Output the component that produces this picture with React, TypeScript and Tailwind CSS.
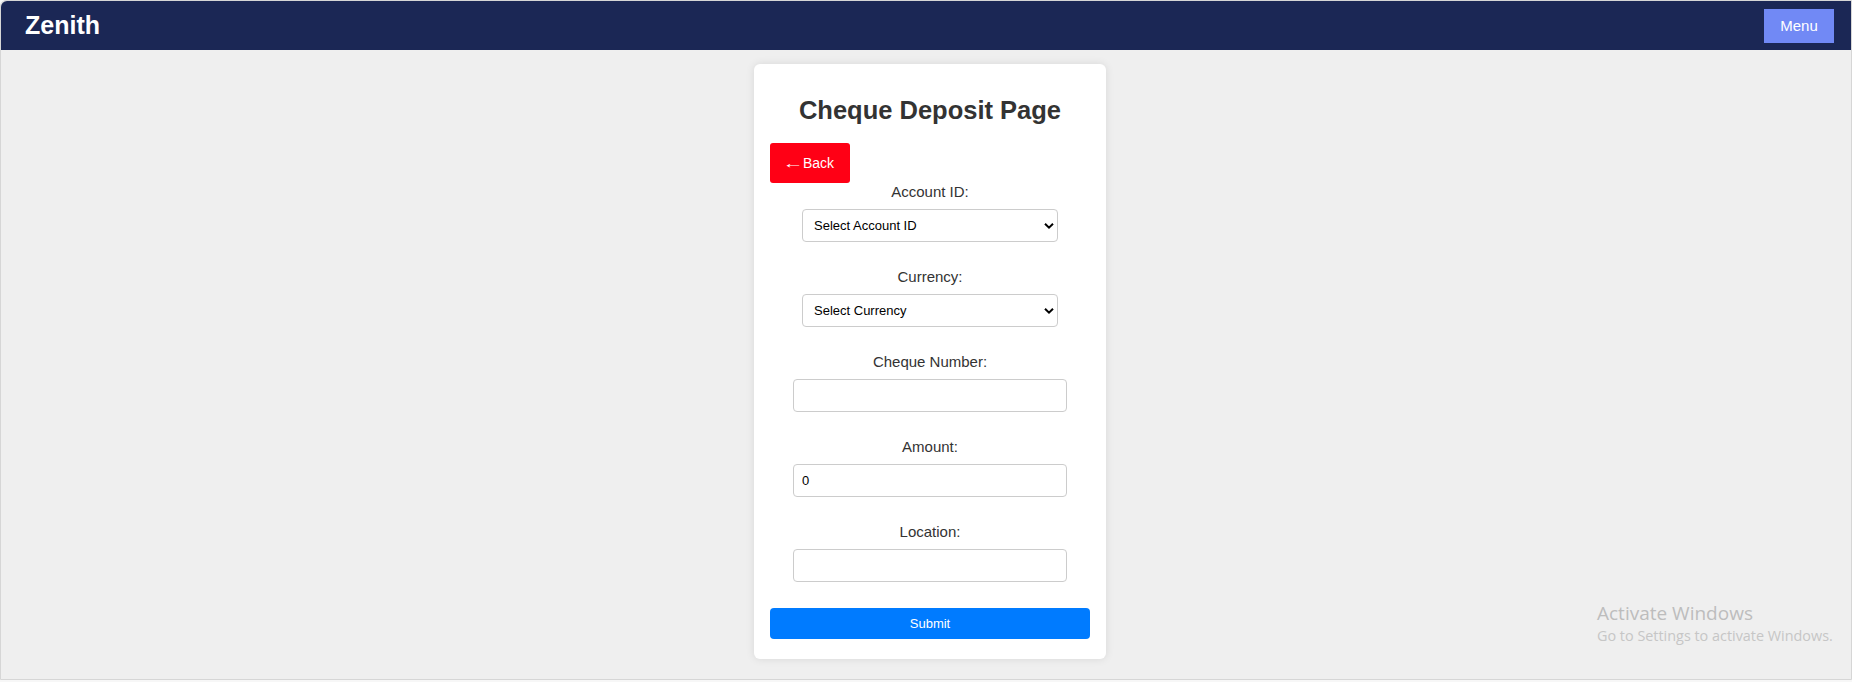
import { useState } from "react";

function ChevronDown() {
  return (
    <svg width="10" height="7" viewBox="0 0 10 7" className="pointer-events-none absolute right-[4px] top-1/2 -translate-y-1/2">
      <path d="M1 1.2 L5 5.2 L9 1.2" fill="none" stroke="#000" strokeWidth="2" />
    </svg>
  );
}

function SelectField({ label, placeholder }: { label: string; placeholder: string }) {
  return (
    <div className="mb-[26px] flex flex-col items-center">
      <label className="mb-2 block text-[15px] leading-[18px] text-[#333]">{label}</label>
      <div className="relative w-[256px]">
        <select className="h-[33px] w-full appearance-none rounded-[4px] border border-[#ccc] bg-white pl-[11px] text-[13px] text-black outline-none">
          <option>{placeholder}</option>
        </select>
        <ChevronDown />
      </div>
    </div>
  );
}

function InputField({
  label,
  value,
  onChange,
  type = "text",
}: {
  label: string;
  value: string;
  onChange: (v: string) => void;
  type?: string;
}) {
  return (
    <div className="mb-[26px] flex flex-col items-center">
      <label className="mb-2 block text-[15px] leading-[18px] text-[#333]">{label}</label>
      <input
        type={type}
        value={value}
        onChange={(e) => onChange(e.target.value)}
        className="h-[33px] w-[274px] rounded-[4px] border border-[#ccc] bg-white px-2 text-[13px] text-black outline-none"
      />
    </div>
  );
}

export default function App() {
  const [form, setForm] = useState({ cheque: "", amount: "0", location: "" });

  return (
    <div className="relative h-[682px] overflow-hidden bg-[#f7f7f7] font-['Liberation_Sans',Arial,sans-serif]">
      <div className="h-[680px] rounded-tl-md border border-[#d6d6d6] bg-[#efefef]">
        {/* NAV */}
        <nav className="flex h-[49px] items-center justify-between rounded-tl-md bg-[#1b2755] pl-6 pr-[17px]">
          <span className="text-[25px] font-bold text-white">Zenith</span>
          <button className="mt-[1px] h-[34px] w-[70px] bg-[#7189f5] text-[15px] text-white">Menu</button>
        </nav>

        {/* CARD */}
        <main className="flex justify-center pt-[14px]">
          <div className="ml-2 w-[352px] rounded-md bg-white px-4 pb-5 pt-[31px] shadow-[0_0_8px_rgba(0,0,0,0.1)]">
            <h2 className="text-center text-[25.5px] font-bold leading-[30px] text-[#333]">Cheque Deposit Page</h2>

            <button className="mt-[18px] flex h-10 w-20 items-center justify-center gap-[2px] rounded-[3px] bg-[#ff0015] text-[14px] text-white">
              <span className="inline-block w-[15px] text-center">
                <span className="inline-block scale-x-150">←</span>
              </span>
              <span>Back</span>
            </button>

            <SelectField label="Account ID:" placeholder="Select Account ID" />
            <SelectField label="Currency:" placeholder="Select Currency" />
            <InputField label="Cheque Number:" value={form.cheque} onChange={(v) => setForm({ ...form, cheque: v })} />
            <InputField label="Amount:" type="number" value={form.amount} onChange={(v) => setForm({ ...form, amount: v })} />
            <InputField label="Location:" value={form.location} onChange={(v) => setForm({ ...form, location: v })} />

            <button className="block h-[31px] w-full rounded-[4px] bg-[#007bff] text-[13px] text-white">Submit</button>
          </div>
        </main>
      </div>

      {/* windows watermark */}
      <div className="pointer-events-none absolute left-[1597px] top-[601px] font-['Open_Sans',sans-serif] text-[#bdbdbd]">
        <p className="text-[19px] leading-[25px]">Activate Windows</p>
        <p className="text-[14.4px] leading-[20px] text-[#c6c6c6]">Go to Settings to activate Windows.</p>
      </div>
    </div>
  );
}
